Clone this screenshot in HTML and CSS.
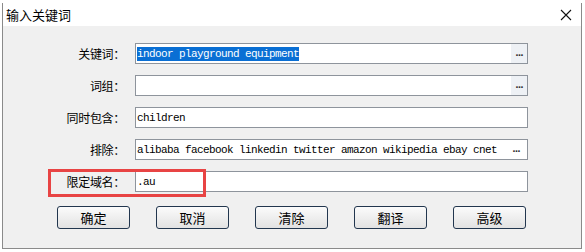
FILE: index.html
```html
<!DOCTYPE html>
<html lang="zh-CN">
<head>
    <meta charset="UTF-8">
    <title>输入关键词</title>
    <link rel="stylesheet" href="styles.css">
</head>
<body>
    <!-- keyword dialog -->
    <div class="dialog">
        <div class="titlebar">
            <span class="title">输入关键词</span>
            <svg class="close" width="12" height="12" viewBox="0 0 12 12">
                <path d="M1 1 L11 11 M11 1 L1 11" stroke="#111" stroke-width="1.1" fill="none"/>
            </svg>
        </div>

        <div class="content">
            <div class="fields">
                <label class="label">关键词：</label>
                <div class="field"><span class="text"><span class="selected">indoor playground equipment</span></span><span class="more">...</span></div>

                <label class="label">词组：</label>
                <div class="field"><span class="text"></span><span class="more">...</span></div>

                <label class="label">同时包含：</label>
                <div class="field"><span class="text">children</span></div>

                <label class="label">排除：</label>
                <div class="field"><span class="text">alibaba facebook linkedin twitter amazon wikipedia ebay cnet</span><span class="more plain">...</span></div>

                <label class="label">限定域名：</label>
                <div class="field"><span class="text">.au</span></div>
            </div>

            <div class="buttons">
                <button class="btn">确定</button>
                <button class="btn">取消</button>
                <button class="btn">清除</button>
                <button class="btn">翻译</button>
                <button class="btn">高级</button>
            </div>

            <!-- annotation box -->
            <div class="mark"></div>
        </div>
    </div>
</body>
</html>
```

FILE: styles.css
```css
body {
    margin: 0;
    background: #ffffff;
    font-family: "Noto Sans CJK SC", sans-serif;
    width: 585px;
    height: 252px;
    overflow: hidden;
}
.dialog {
    margin: 3px 0 0 2px;
    width: 580px;
    height: 246px;
    box-sizing: border-box;
    border: 1px solid #8a8a8a;
    border-top: none;
    background: #f0f0f0;
    display: flex;
    flex-direction: column;
}
.titlebar {
    height: 23px;
    background: #ffffff;
    display: flex;
    align-items: center;
    justify-content: space-between;
    padding: 0 9px 0 3px;
}
.title {
    font-size: 13px;
    color: #000;
    line-height: 1;
}
.content {
    position: relative;
    padding: 17px 0 0 0;
}
.fields {
    display: grid;
    grid-template-columns: 122px 393px;
    column-gap: 10px;
    row-gap: 11px;
    align-items: center;
}
.label {
    font-size: 12px;
    text-align: right;
    color: #000;
    line-height: 21px;
    letter-spacing: -0.3px;
}
.field {
    height: 21px;
    box-sizing: border-box;
    border: 1px solid #8e949c;
    background: #ffffff;
    display: flex;
    align-items: center;
    justify-content: space-between;
}
.text {
    font-family: "Liberation Mono", monospace;
    font-size: 11px;
    letter-spacing: -0.6px;
    color: #000;
    padding-left: 1px;
    white-space: nowrap;
}
.selected {
    background: #0a6fd4;
    color: #fff;
    padding: 1px 0;
}
.more {
    width: 16px;
    height: 19px;
    background: #eef1f5;
    font-family: "DejaVu Sans", sans-serif;
    font-size: 9px;
    font-weight: bold;
    letter-spacing: -1px;
    color: #333;
    display: flex;
    align-items: flex-end;
    justify-content: center;
    padding-bottom: 5px;
    box-sizing: border-box;
}
.more.plain {
    background: transparent;
    margin-right: 3px;
}
.buttons {
    display: flex;
    gap: 26px;
    padding: 14px 0 0 54px;
}
.btn {
    width: 73px;
    height: 23px;
    border: 1px solid #22364e;
    border-radius: 3px;
    background: linear-gradient(#fbfbfb, #e2e2e2);
    font-family: "Noto Sans CJK SC", sans-serif;
    font-size: 13px;
    color: #000;
    padding: 0;
    line-height: 1;
}
.mark {
    position: absolute;
    left: 45px;
    top: 143px;
    width: 158px;
    height: 28px;
    box-sizing: border-box;
    border: 3px solid #e84444;
}
```
